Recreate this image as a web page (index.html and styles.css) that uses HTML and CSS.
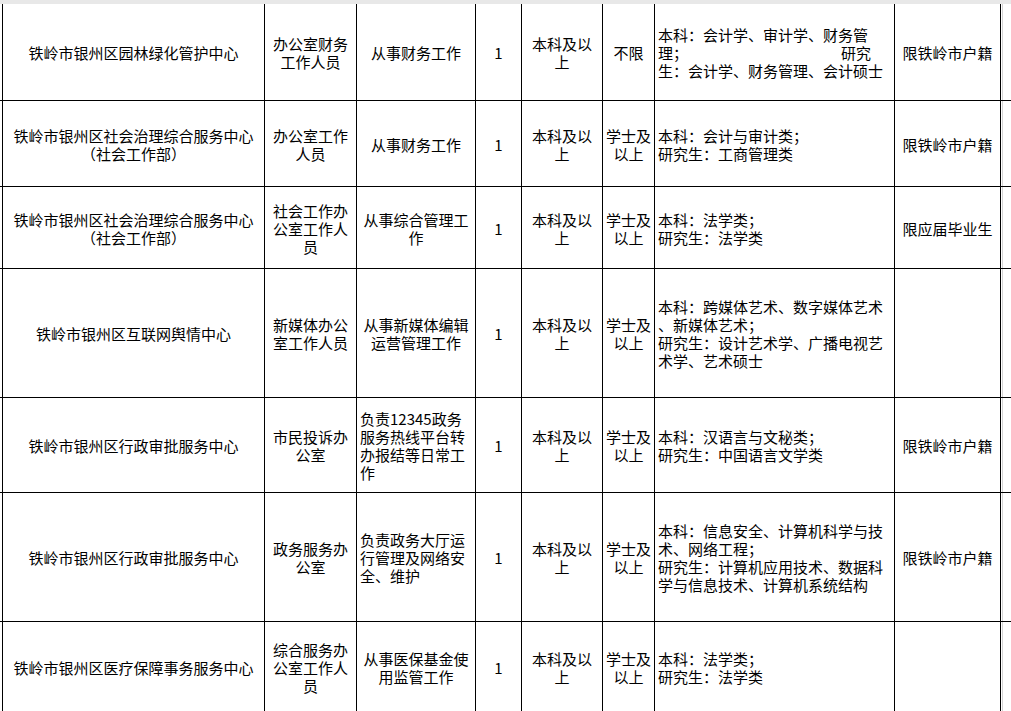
FILE: index.html
```html
<!DOCTYPE html>
<html lang="zh-CN">
<head>
<meta charset="utf-8">
<title>岗位表</title>
<link rel="stylesheet" href="styles.css">
</head>
<body>
<div class="band"></div>
<div class="sheet">
  <div class="row r1">
    <div class="pad"></div>
    <div class="c first">铁岭市银州区园林绿化管护中心</div>
    <div class="c">办公室财务<br>工作人员</div>
    <div class="c">从事财务工作</div>
    <div class="c">1</div>
    <div class="c">本科及以<br>上</div>
    <div class="c">不限</div>
    <div class="c l"><div class="t">本科：会计学、审计学、财务管<br><span class="gap">理；</span>研究<br>生：会计学、财务管理、会计硕士</div></div>
    <div class="c">限铁岭市户籍</div>
    <div class="c grid"></div>
    <div class="rest"></div>
  </div>
  <div class="row r2">
    <div class="pad"></div>
    <div class="c first">铁岭市银州区社会治理综合服务中心<br>（社会工作部）</div>
    <div class="c">办公室工作<br>人员</div>
    <div class="c">从事财务工作</div>
    <div class="c">1</div>
    <div class="c">本科及以<br>上</div>
    <div class="c">学士及<br>以上</div>
    <div class="c l">本科：会计与审计类；<br>研究生：工商管理类</div>
    <div class="c">限铁岭市户籍</div>
    <div class="c grid"></div>
    <div class="rest"></div>
  </div>
  <div class="row r3">
    <div class="pad"></div>
    <div class="c first">铁岭市银州区社会治理综合服务中心<br>（社会工作部）</div>
    <div class="c">社会工作办<br>公室工作人<br>员</div>
    <div class="c">从事综合管理工<br>作</div>
    <div class="c">1</div>
    <div class="c">本科及以<br>上</div>
    <div class="c">学士及<br>以上</div>
    <div class="c l">本科：法学类；<br>研究生：法学类</div>
    <div class="c">限应届毕业生</div>
    <div class="c grid"></div>
    <div class="rest"></div>
  </div>
  <div class="row r4">
    <div class="pad"></div>
    <div class="c first">铁岭市银州区互联网舆情中心</div>
    <div class="c">新媒体办公<br>室工作人员</div>
    <div class="c">从事新媒体编辑<br>运营管理工作</div>
    <div class="c">1</div>
    <div class="c">本科及以<br>上</div>
    <div class="c">学士及<br>以上</div>
    <div class="c l">本科：跨媒体艺术、数字媒体艺术<br>、新媒体艺术；<br>研究生：设计艺术学、广播电视艺<br>术学、艺术硕士</div>
    <div class="c"></div>
    <div class="c grid"></div>
    <div class="rest"></div>
  </div>
  <div class="row r5">
    <div class="pad"></div>
    <div class="c first">铁岭市银州区行政审批服务中心</div>
    <div class="c">市民投诉办<br>公室</div>
    <div class="c l">负责12345政务<br>服务热线平台转<br>办报结等日常工<br>作</div>
    <div class="c">1</div>
    <div class="c">本科及以<br>上</div>
    <div class="c">学士及<br>以上</div>
    <div class="c l">本科：汉语言与文秘类；<br>研究生：中国语言文学类</div>
    <div class="c">限铁岭市户籍</div>
    <div class="c grid"></div>
    <div class="rest"></div>
  </div>
  <div class="row r6">
    <div class="pad"></div>
    <div class="c first">铁岭市银州区行政审批服务中心</div>
    <div class="c">政务服务办<br>公室</div>
    <div class="c l">负责政务大厅运<br>行管理及网络安<br>全、维护</div>
    <div class="c">1</div>
    <div class="c">本科及以<br>上</div>
    <div class="c">学士及<br>以上</div>
    <div class="c l">本科：信息安全、计算机科学与技<br>术、网络工程；<br>研究生：计算机应用技术、数据科<br>学与信息技术、计算机系统结构</div>
    <div class="c">限铁岭市户籍</div>
    <div class="c grid"></div>
    <div class="rest"></div>
  </div>
  <div class="row r7">
    <div class="pad"></div>
    <div class="c first">铁岭市银州区医疗保障事务服务中心</div>
    <div class="c">综合服务办<br>公室工作人<br>员</div>
    <div class="c">从事医保基金使<br>用监管工作</div>
    <div class="c">1</div>
    <div class="c">本科及以<br>上</div>
    <div class="c">学士及<br>以上</div>
    <div class="c l">本科：法学类；<br>研究生：法学类</div>
    <div class="c"></div>
    <div class="c grid"></div>
    <div class="rest"></div>
  </div>
</div>
</body>
</html>
```

FILE: styles.css
```css
html, body {
  margin: 0;
  padding: 0;
  background: #ffffff;
  overflow: hidden;
}

body {
  font-family: "Noto Sans CJK SC", "Noto Sans", sans-serif;
  font-size: 15px;
  line-height: 18px;
  color: #000000;
}

.band {
  height: 4px;
  background: #e8e8e8;
}

.sheet {
  display: flex;
  flex-direction: column;
}

.row {
  display: grid;
  grid-template-columns: 2px 263px 92px 119px 46px 81px 52px 240px 106px 2px 1fr;
  border-bottom: 1px solid #000000;
  box-sizing: border-box;
}

.r1 { height: 97px; }
.r2 { height: 86px; }
.r3 { height: 82px; }
.r4 { height: 129px; }
.r5 { height: 95px; }
.r6 { height: 129px; }
.r7 { height: 91px; }

.c {
  box-sizing: border-box;
  border-right: 1px solid #000000;
  display: flex;
  align-items: center;
  justify-content: center;
  text-align: center;
  white-space: nowrap;
  padding-top: 2px;
  overflow: visible;
}

.c.first {
  border-left: 1px solid #000000;
}

.c.l {
  justify-content: flex-start;
  text-align: left;
  padding-left: 3px;
}

.c.grid {
  border-right: 1px solid #d4d4d4;
}

.t {
  display: block;
}

.gap {
  display: inline-block;
  width: 183px;
}
```
